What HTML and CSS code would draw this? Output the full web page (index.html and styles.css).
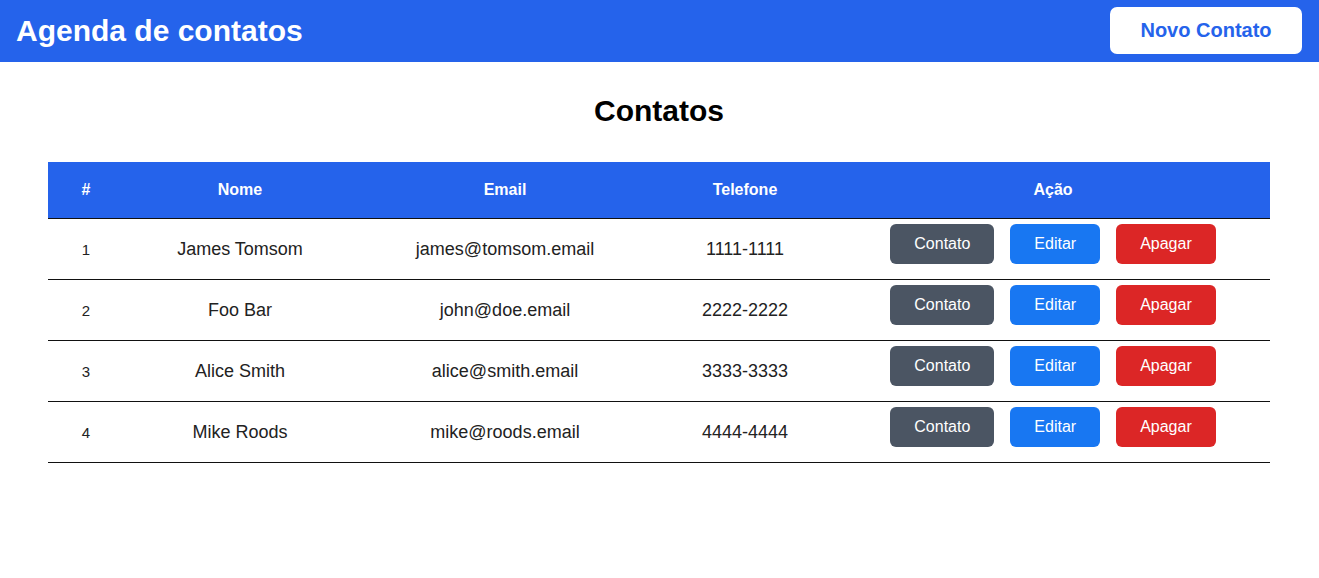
FILE: index.html
```html
<!DOCTYPE html>
<html lang="pt-BR">
<head>
<meta charset="utf-8">
<title>Agenda de contatos</title>
<link rel="stylesheet" href="styles.css">
</head>
<body>
<header class="topbar">
  <h1 class="brand">Agenda de contatos</h1>
  <button class="btn-new">Novo Contato</button>
</header>
<main class="content">
  <h2 class="title">Contatos</h2>
  <table class="contacts">
    <colgroup>
      <col class="c-id"><col class="c-name"><col class="c-email"><col class="c-phone"><col class="c-action">
    </colgroup>
    <thead>
      <tr><th>#</th><th>Nome</th><th>Email</th><th>Telefone</th><th>Ação</th></tr>
    </thead>
    <tbody>
      <tr>
        <td class="id">1</td><td>James Tomsom</td><td>james@tomsom.email</td><td>1111-1111</td>
        <td class="actions"><div class="btns"><button class="btn gray">Contato</button><button class="btn blue">Editar</button><button class="btn red">Apagar</button></div></td>
      </tr>
      <tr>
        <td class="id">2</td><td>Foo Bar</td><td>john@doe.email</td><td>2222-2222</td>
        <td class="actions"><div class="btns"><button class="btn gray">Contato</button><button class="btn blue">Editar</button><button class="btn red">Apagar</button></div></td>
      </tr>
      <tr>
        <td class="id">3</td><td>Alice Smith</td><td>alice@smith.email</td><td>3333-3333</td>
        <td class="actions"><div class="btns"><button class="btn gray">Contato</button><button class="btn blue">Editar</button><button class="btn red">Apagar</button></div></td>
      </tr>
      <tr>
        <td class="id">4</td><td>Mike Roods</td><td>mike@roods.email</td><td>4444-4444</td>
        <td class="actions"><div class="btns"><button class="btn gray">Contato</button><button class="btn blue">Editar</button><button class="btn red">Apagar</button></div></td>
      </tr>
    </tbody>
  </table>
</main>
</body>
</html>
```
FILE: styles.css
```css
* { box-sizing: border-box; }
body {
  margin: 0;
  font-family: "Liberation Sans", Arial, sans-serif;
  background: #fff;
  color: #222;
}
.topbar {
  height: 62px;
  background: #2563eb;
  display: flex;
  align-items: center;
  justify-content: space-between;
  padding: 0 17px 0 16px;
}
.brand {
  margin: 0;
  color: #fff;
  font-size: 30px;
  font-weight: bold;
  line-height: 36px;
}
.btn-new {
  height: 47px;
  width: 192px;
  margin-top: -1px;
  border: none;
  border-radius: 7px;
  background: #fff;
  color: #2563eb;
  font-family: inherit;
  font-size: 20px;
  font-weight: bold;
}
.content {
  padding: 0 49px 0 48px;
}
.title {
  margin: 31px 0 33px;
  text-align: center;
  font-size: 30px;
  line-height: 36px;
  font-weight: bold;
  color: #000;
}
.contacts {
  width: 100%;
  border-collapse: collapse;
  table-layout: fixed;
}
.c-id { width: 76px; }
.c-name { width: 232px; }
.c-email { width: 298px; }
.c-phone { width: 182px; }
.contacts th {
  background: #2563eb;
  color: #fff;
  font-size: 16px;
  font-weight: bold;
  height: 56px;
  padding: 0;
  text-align: center;
  border-bottom: 1px solid #111;
}
.contacts td {
  text-align: center;
  vertical-align: middle;
  font-size: 18px;
  padding: 1px 0 0;
  height: 61px;
  border-bottom: 1px solid #111;
}
.contacts td.id { font-size: 15px; }
.contacts td.actions { vertical-align: top; padding-top: 5px; }
.btns {
  display: flex;
  justify-content: center;
  gap: 16px;
}
.btn {
  height: 40px;
  padding: 0 24px;
  border: none;
  border-radius: 6px;
  color: #fff;
  font-family: inherit;
  font-size: 16px;
}
.gray { background: #4b5563; }
.blue { background: #1877f2; }
.red { background: #dc2626; }
```
